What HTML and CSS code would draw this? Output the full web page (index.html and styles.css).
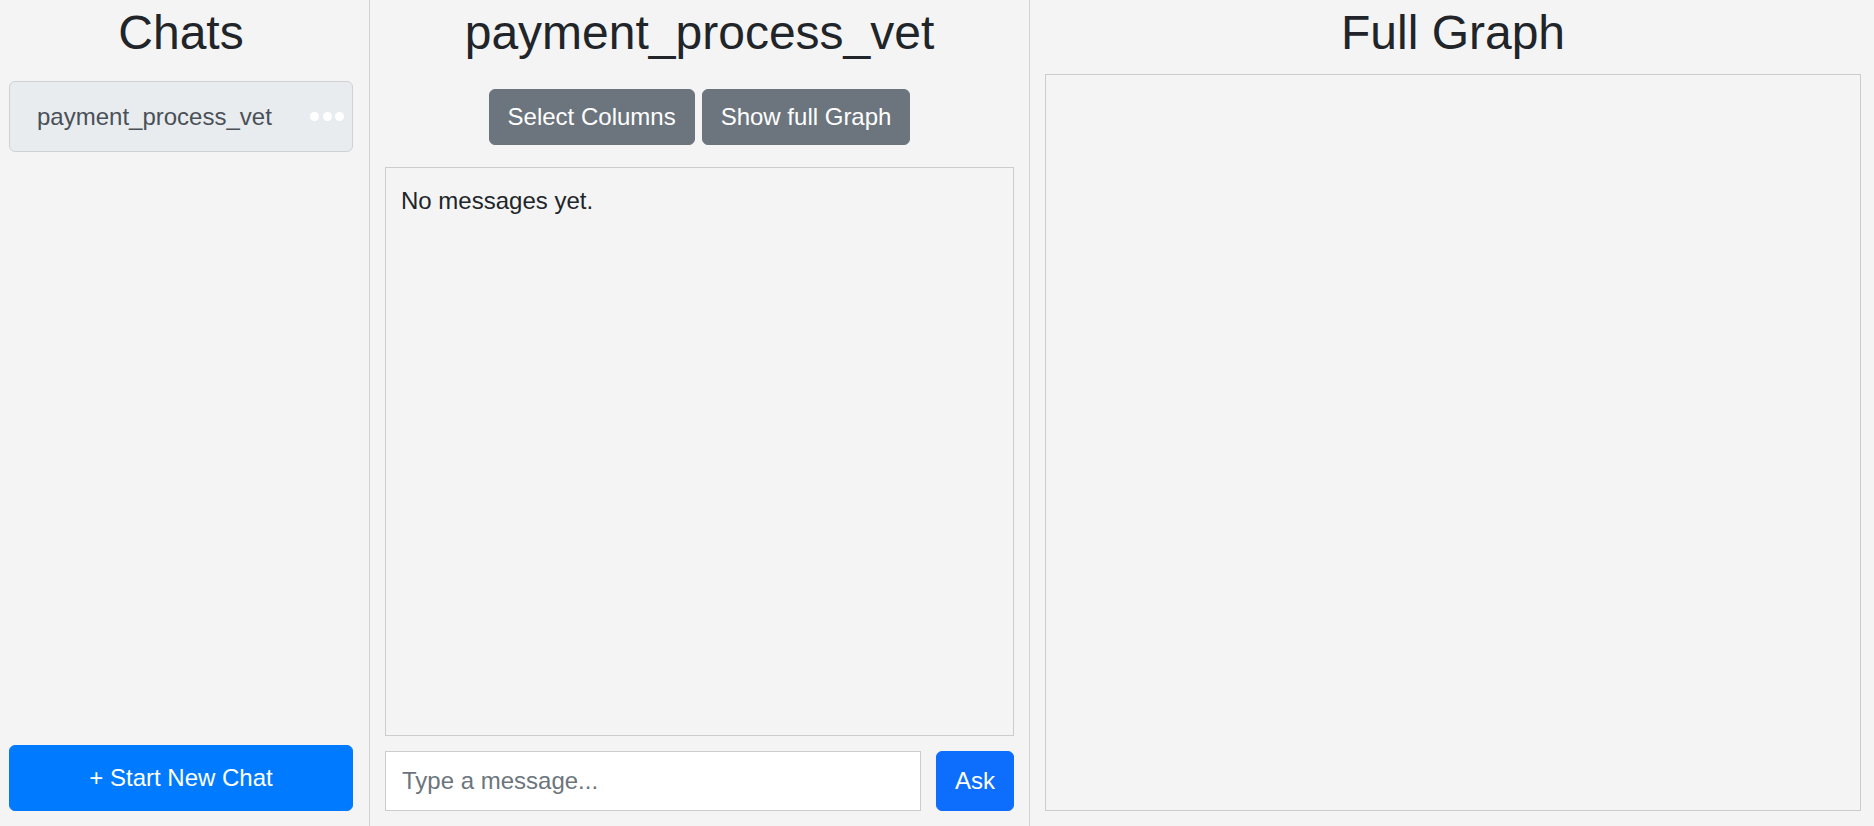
FILE: index.html
```html
<!DOCTYPE html>
<html lang="en">
<head>
<meta charset="utf-8">
<title>Chats</title>
<link rel="stylesheet" href="styles.css">
</head>
<body>
<div class="app">
  <aside class="sidebar">
    <h2 class="title">Chats</h2>
    <div class="chat-list">
      <div class="chat-item">
        <span class="chat-name">payment_process_vet</span>
        <span class="dots"><i></i><i></i><i></i></span>
      </div>
    </div>
    <button class="btn btn-new" type="button">+ Start New Chat</button>
  </aside>
  <main class="chat">
    <h2 class="title">payment_process_vet</h2>
    <div class="actions">
      <button class="btn btn-secondary" type="button">Select Columns</button>
      <button class="btn btn-secondary" type="button">Show full Graph</button>
    </div>
    <div class="messages"><p>No messages yet.</p></div>
    <div class="composer">
      <input class="msg-input" type="text" placeholder="Type a message...">
      <button class="btn btn-ask" type="button">Ask</button>
    </div>
  </main>
  <section class="graph">
    <h2 class="title">Full Graph</h2>
    <div class="graph-box"></div>
  </section>
</div>
</body>
</html>
```

FILE: styles.css
```css
* { box-sizing: border-box; }
html, body { margin: 0; padding: 0; height: 100%; }
body {
  background: #f4f4f4;
  font-family: "Liberation Sans", Arial, sans-serif;
  font-size: 24px;
  line-height: 1.5;
  color: #212529;
  overflow: hidden;
}
.app { display: flex; height: 826px; }

.title {
  margin: 0;
  font-size: 48px;
  font-weight: 400;
  line-height: 58px;
  text-align: center;
  color: #212529;
}

.btn {
  font-family: inherit;
  font-size: 24px;
  line-height: 36px;
  color: #fff;
  border: 1px solid transparent;
  border-radius: 6px;
  cursor: pointer;
}

/* Sidebar */
.sidebar {
  width: 370px;
  flex: none;
  border-right: 1px solid #d2d2d2;
  padding: 4px 16px 15px 9px;
  display: flex;
  flex-direction: column;
}
.chat-list { flex: 1; margin-top: 19px; }
.chat-item {
  height: 71px;
  display: flex;
  align-items: center;
  background: #e9ecef;
  border: 1px solid #cfd1d3;
  border-radius: 6px;
  padding: 0 8px 0 27px;
}
.chat-name { color: #495057; }
.dots { margin-left: auto; display: flex; gap: 3.5px; }
.dots i { display: block; width: 9px; height: 9px; border-radius: 50%; background: #fff; }
.btn-new {
  height: 66px;
  width: 100%;
  background: #007bff;
  border-color: #007bff;
}

/* Chat column */
.chat {
  width: 660px;
  flex: none;
  border-right: 1px solid #d2d2d2;
  padding: 4px 15px 15px 15px;
  display: flex;
  flex-direction: column;
}
.actions {
  margin-top: 27px;
  display: flex;
  justify-content: center;
  gap: 7px;
}
.btn-secondary {
  height: 56px;
  padding: 0 18px;
  background: #6c757d;
  border-color: #6c757d;
}
.messages {
  flex: 1;
  margin-top: 22px;
  border: 1px solid #cccccc;
  padding: 15px;
}
.messages p { margin: 0; }
.composer {
  margin-top: 15px;
  display: flex;
  gap: 15px;
}
.msg-input {
  flex: 1;
  min-width: 0;
  height: 60px;
  border: 1px solid #cccccc;
  background: #fff;
  padding: 0 16px;
  font-family: inherit;
  font-size: 24px;
  color: #212529;
  outline: none;
}
.msg-input::placeholder { color: #6c757d; }
.btn-ask {
  height: 60px;
  padding: 0 18px;
  background: #0d6efd;
  border-color: #0d6efd;
}

/* Graph column */
.graph {
  flex: 1;
  padding: 4px 13px 15px 15px;
  display: flex;
  flex-direction: column;
}
.graph-box {
  flex: 1;
  margin-top: 12px;
  border: 1px solid #cccccc;
}
```
